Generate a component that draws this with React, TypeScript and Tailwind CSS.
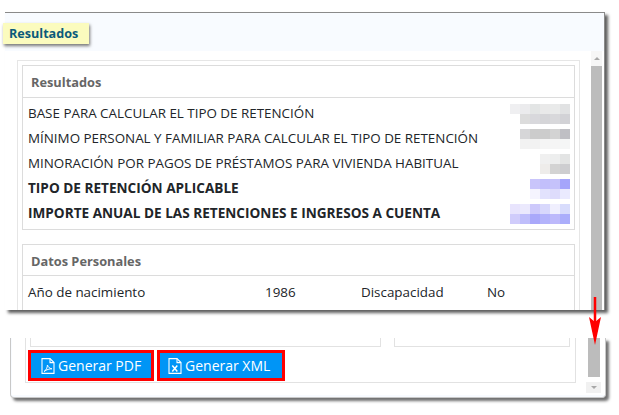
import React from 'react';

const font = "[font-family:'Open_Sans',sans-serif]";

// blurred values from the original capture, one cell = 10px
const blurRows: { start: number; colors: string[] }[][] = [
  [
    { start: 0, colors: ['#efeff1', '#ebebed', '#e3e5e5', '#e9e9e9', '#e9eaea', '#e1e2e3'] },
    { start: 1, colors: ['#dcdcdc', '#d8d8dc', '#d5d5d8', '#d8d8db', '#d2d2d6'] },
  ],
  [
    { start: 1, colors: ['#d6d6d8', '#cccccc', '#cccccc', '#d3d3d3', '#bfbfc4'] },
    { start: 1, colors: ['#f2f2f2', '#f2f2f2', '#f5f5f5', '#f5f5f5', '#f5f6f6'] },
  ],
  [
    { start: 3, colors: ['#f0f0f0', '#edeeee', '#e3e4e4'] },
    { start: 3, colors: ['#eeecea', '#d3d3d3', '#cdcdd0'] },
  ],
  [
    { start: 2, colors: ['#c9c5fb', '#c2bffb', '#c5c2fb', '#a5a5fb'] },
    { start: 2, colors: ['#f5f4fe', '#e2e2fd', '#dedcfc', '#eaeafe'] },
  ],
  [
    { start: 0, colors: ['#e8e4fd', '#ebe9fd', '#cdc9fb', '#d8d8fc', '#f0effe', '#d8dcfc'] },
    { start: 0, colors: ['#d0ccfb', '#bfbefb', '#a9a8fa', '#b3b3fb', '#bdb9fb', '#abaefb'] },
  ],
];

function Blur({ rows }: { rows: { start: number; colors: string[] }[] }) {
  return (
    <svg width="60" height="20" className="shrink-0">
      {rows.map((row, y) =>
        row.colors.map((c, x) => (
          <rect key={x} x={(row.start + x) * 10} y={y * 10} width="10" height="10" fill={c} />
        ))
      )}
    </svg>
  );
}

function ResultRow({ label, index, bold }: { label: string; index: number; bold?: boolean }) {
  return (
    <div className={`flex items-center justify-between h-[25px] pl-[5px] pr-[4px] text-[#212529] ${bold ? 'font-bold text-[13.6px]' : 'text-[13.4px]'}`}>
      <span className="whitespace-nowrap">{label}</span>
      <Blur rows={blurRows[index]} />
    </div>
  );
}

function PdfIcon() {
  return (
    <svg width="14" height="16" viewBox="0 0 14 16" fill="none" stroke="#fff" strokeWidth="1.1" className="shrink-0">
      <path d="M1 .6h8l4 4v10.800H1z" />
      <path d="M9 .6v4h4" />
      <path d="M3 13.500c2-1 3.500-4 3.400-6.500 1 2.500 2.500 3.500 4.500 3.800-2.500 0-5 .7-7.900 2.700z" strokeWidth="1" />
    </svg>
  );
}

function XmlIcon() {
  return (
    <svg width="14" height="16" viewBox="0 0 14 16" fill="none" stroke="#fff" strokeWidth="1.1" className="shrink-0">
      <path d="M1 .6h8l4 4v10.800H1z" />
      <path d="M9 .6v4h4" />
      <path d="M4.300 7.500l5 6M9.300 7.500l-5 6" strokeWidth="1.500" />
    </svg>
  );
}

export default function App() {
  return (
    <div className={`relative w-[619px] h-[415px] overflow-hidden bg-white ${font}`}>
      <div className="pt-[12px] pl-[5px]">
        {/* top capture */}
        <div className="relative w-[600px] h-[298px] overflow-hidden bg-white border-t border-r border-[#8a8a8a] shadow-[3px_3px_3px_#5f5f5f]">
          <div className="h-[38px] bg-[#f8fbff]" />
          <div className="flex">
            <div className="ml-[12px] mt-[9px] w-[563px] border-x border-t border-[#e6e6e6] px-[4px] pt-[4px] h-[260px]">
              <div className="border border-[#dcdcdc]">
                <div className="h-[32px] flex items-center pl-[8px] pt-[2px] border-b border-[#dcdcdc] text-[12.8px] font-bold text-[#666]">
                  Resultados
                </div>
                <div className="pt-[3px] pb-[3px]">
                  <ResultRow index={0} label="BASE PARA CALCULAR EL TIPO DE RETENCIÓN" />
                  <ResultRow index={1} label="MÍNIMO PERSONAL Y FAMILIAR PARA CALCULAR EL TIPO DE RETENCIÓN" />
                  <ResultRow index={2} label="MINORACIÓN POR PAGOS DE PRÉSTAMOS PARA VIVIENDA HABITUAL" />
                  <ResultRow index={3} label="TIPO DE RETENCIÓN APLICABLE" bold />
                  <ResultRow index={4} label="IMPORTE ANUAL DE LAS RETENCIONES E INGRESOS A CUENTA" bold />
                </div>
              </div>
              <div className="mt-[14px] border-x border-t border-[#dcdcdc] h-[70px]">
                <div className="h-[31px] flex items-center pl-[8px] pt-[3px] border-b border-[#dcdcdc] text-[12.8px] font-bold text-[#666]">
                  Datos Personales
                </div>
                <div className="flex items-center h-[33px] pl-[5px] text-[13.4px] text-[#212529]">
                  <span className="w-[237px]">Año de nacimiento</span>
                  <span className="w-[96px]">1986</span>
                  <span className="w-[126px]">Discapacidad</span>
                  <span>No</span>
                </div>
              </div>
            </div>
            <div className="ml-[11px] w-[11px] flex flex-col items-center">
              <div className="h-[15px] w-full bg-[#f6f6f6] flex items-center justify-center">
                <div className="w-0 h-0 border-x-[3px] border-x-transparent border-b-[3px] border-b-[#a8a8a8]" />
              </div>
              <div className="w-full flex-1 bg-[#bcbcbc]" />
            </div>
          </div>
        </div>

        {/* bottom capture */}
        <div className="relative mt-[28px] ml-[5px] w-[596px] h-[60px] bg-[#f8fbff] border-l border-r border-b border-[#c8c8c8] rounded-b-[4px] shadow-[3px_3px_3px_#6f6f6f]">
          <div className="flex h-[57px] bg-white ml-[1px]">
            <div className="ml-[13px] w-[551px] h-[45px] border-x border-b border-[#e2e2e2] px-[4px]">
              <div className="flex gap-[13px] h-[9px]">
                <div className="w-[351px] border-x border-b border-[#e2e2e2]" />
                <div className="w-[176px] border-x border-b border-[#e2e2e2]" />
              </div>
              <div className="flex gap-[3px] mt-[3px] -ml-[2px]">
                <button className="flex items-center gap-[3px] w-[126px] h-[31px] pl-[10px] bg-[#0095f6] border-[3px] border-[#ff0000] text-white text-[14px]">
                  <PdfIcon />
                  Generar PDF
                </button>
                <button className="flex items-center gap-[3px] w-[128px] h-[31px] pl-[8px] bg-[#0095f6] border-[3px] border-[#ff0000] text-white text-[14px]">
                  <XmlIcon />
                  Generar XML
                </button>
              </div>
            </div>
            <div className="ml-[10px] w-[15px] flex flex-col items-center">
              <div className="w-[12px] h-[39px] bg-[#bcbcbc]" />
              <div className="mt-[5px] w-[15px] h-[11px] bg-[#f1f1f1] flex items-center justify-center">
                <div className="w-0 h-0 border-x-[3px] border-x-transparent border-t-[3px] border-t-[#a8a8a8]" />
              </div>
            </div>
          </div>
        </div>
      </div>

      {/* tooltip label */}
      <div className="absolute left-[3px] top-[23px] w-[86px] h-[21px] flex items-center pl-[6px] pt-[1px] bg-[#fbfbbe] shadow-[1px_2px_3px_#777] text-[12.6px] font-bold text-[#0b5a7a]">
        Resultados
      </div>

      {/* red arrow */}
      <svg className="absolute left-[588px] top-[297px]" width="14" height="50" viewBox="0 0 14 50">
        <path d="M7 0v25" stroke="#ff0000" strokeWidth="2.500" />
        <path d="M1 20l6 5 6-5-6 28z" fill="#ff0000" />
      </svg>
    </div>
  );
}
